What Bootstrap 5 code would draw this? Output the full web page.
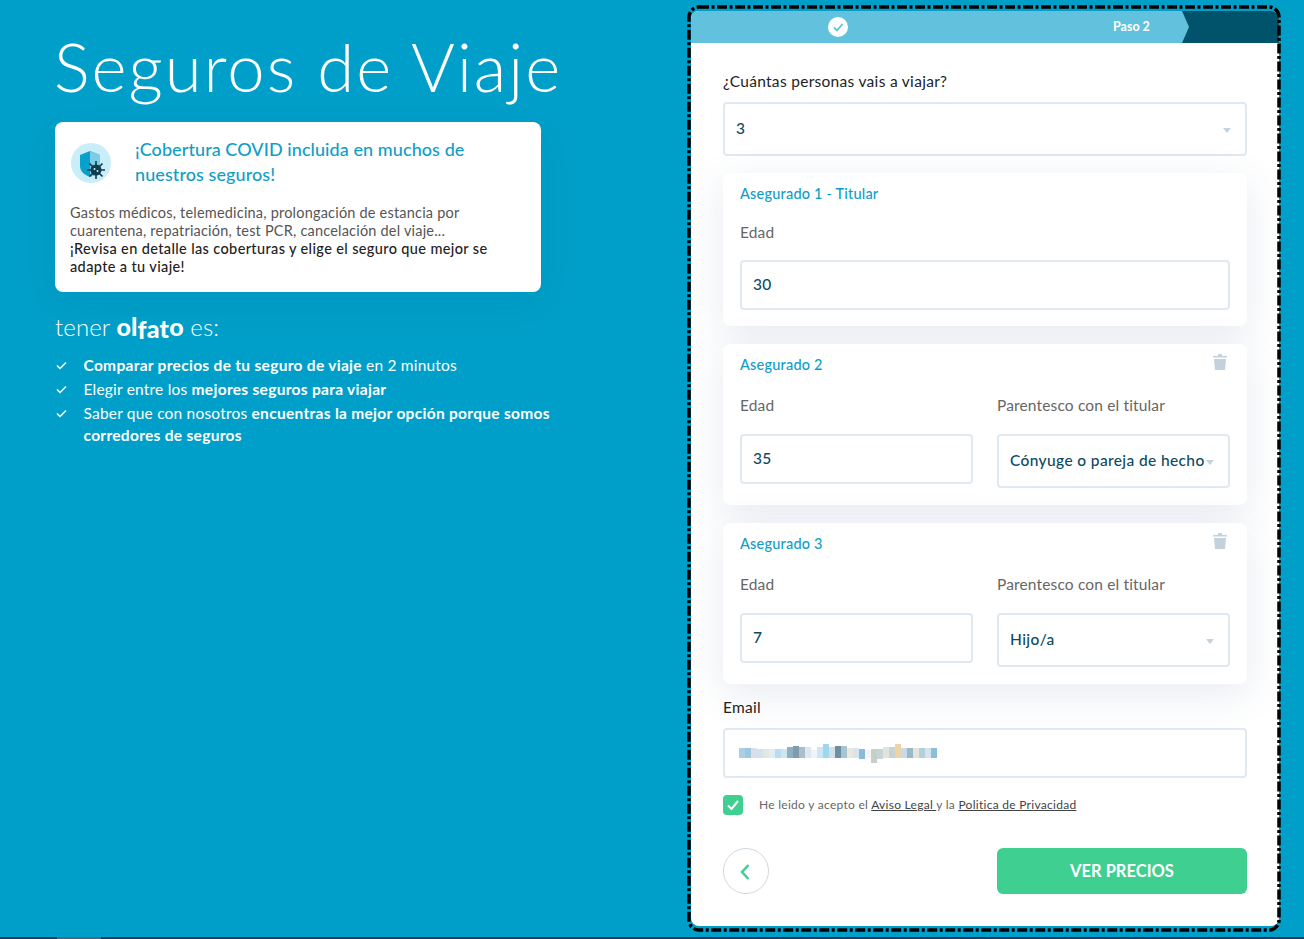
<!doctype html>
<html lang="es"><head><meta charset="utf-8">
<link href="https://cdn.jsdelivr.net/npm/bootstrap@5.3.0/dist/css/bootstrap.min.css" rel="stylesheet">
<style>
html,body{height:100%;overflow:hidden}
body{background:#009fc9;font-family:Lato,"Liberation Sans",sans-serif;color:#222}
.stage{height:937px;padding:5px 23px 0 55px}
.leftcol{width:509px;flex:none;margin-right:123px}
.maintitle{font-size:67px;font-weight:300;color:#fff;line-height:76px;margin:23px 0 18px -1px;letter-spacing:2px;white-space:nowrap}
.covid{width:486px;height:170px;background:#fff;border-radius:8px;padding:15px 15px 0;box-shadow:0 10px 40px rgba(0,60,90,.08)}
.covid-h{font-size:18px;line-height:25px;font-weight:500;color:#109ec6;letter-spacing:.08px;margin-left:65px;width:340px}
.covid-ic{width:40px;height:40px;flex:none;margin-top:6px;left:1px}
.covid-t{font-size:14.500px;line-height:18px;color:#555;margin-top:17px;font-weight:400;letter-spacing:.2px}
.covid-t b{font-weight:500;color:#222;letter-spacing:.37px}
.tener{font-size:24px;font-weight:300;color:#fff;margin:19px 0 0;line-height:30px;letter-spacing:.1px}
.logo{font-weight:900;font-size:25px;letter-spacing:.1px}
.logo span{display:inline-block}
.logo .dn{transform:translateY(3px)}
.logo .dm{transform:translateY(1.500px)}
.perks{list-style:none;padding:0;margin:12px 0 0;color:#fff;font-size:15.5px;line-height:22px;font-weight:400;letter-spacing:.2px}
.perks li{position:relative;padding-left:28.500px;margin-bottom:2px}
.perks b{font-weight:700;letter-spacing:.3px}
.perks svg{position:absolute;left:1px;top:7px;width:11px;height:9px}
.frame{position:relative;width:594px;height:927px;padding:6px 3px 0 4px;flex:none}
.frame-line{position:absolute;left:0;top:0;width:100%;height:100%;pointer-events:none}
.panel{background:#fff;height:915px;width:588px;border-radius:8px;overflow:hidden}
.steps{height:32px;background:#62c2de;position:relative;color:#fff;font-size:12.500px;font-weight:700}
.steps-end{position:absolute;right:0;top:0;height:32px;width:100px}
.steps-check{position:absolute;left:137px;top:6px;width:20px;height:20px}
.steps-lab{position:absolute;left:422px;top:8px;line-height:16px}
.formarea{padding:27px 32px 0}
.qlabel{font-size:15.5px;line-height:22px;margin:0 0 10px;letter-spacing:.3px;color:#222}
.fieldbox{height:54px;border:2px solid #e0e9f0;border-radius:4px;background:#fff;padding:0 11px;display:flex;align-items:center;color:#0d4b5f;font-size:15.5px;font-weight:500;position:relative;letter-spacing:.38px;white-space:nowrap}
.fieldbox.tall{height:50px}
.fieldbox.mailbox{padding-left:14px}
.caret{position:absolute;right:14px;top:50%;margin-top:-1px;border:4.5px solid transparent;border-top:5px solid #c5d3dd;border-bottom:0}
.ins{background:#fff;border-radius:8px;padding:11px 17px 17px;box-shadow:0 10px 40px rgba(60,90,140,.12);position:relative;margin-bottom:18px}
.ins.first{padding-bottom:16px;margin-top:17px}
.ins.last{margin-bottom:12px}
.ins-h{font-size:14.500px;line-height:20px;color:#109ec6;font-weight:500;letter-spacing:.2px}
.ins-l{font-size:15.5px;line-height:22px;color:#666;margin:19px 0 18px;letter-spacing:.15px}
.first .ins-l{margin:17px 0 17px}
.bin{position:absolute;right:20px;top:10px;width:14px;height:16px}
.accept{font-size:12px;color:#666;letter-spacing:.28px;margin-top:17px}
.accept a{color:#444}
.chk{width:20px;height:20px;border-radius:4px;background:#3fcf91;flex:none;margin-right:16px}
.back{width:46px;height:46px;border-radius:50%;border:1px solid #cfd8df;background:#fff;padding:0 2px 2px 0}
.go{width:250px;height:46px;background:#3fcf91;border:0;border-radius:6px;color:#fff;font-weight:700;font-size:16.500px}
.go:hover{background:#3fcf91;color:#fff}
.actions{margin-top:33px}
.baseline{height:2px;background:#1c3a5e;position:relative}
.baseline i{position:absolute;left:57px;width:44px;height:2px;background:#56637f}
</style></head><body>
<div class="d-flex stage">
<div class="leftcol">
<h1 class="maintitle">Seguros de Viaje</h1>
<div class="covid">
<div class="position-relative">
<svg class="covid-ic position-absolute" viewBox="0 0 40 40"><circle cx="20" cy="20" r="20" fill="#c9eef9"/><path d="M9 12l10-4 10 4v11c0 6-5 9-10 11-5-2-10-5-10-11z" fill="#0aa0cc"/><path d="M19 8l10 4v11c0 6-5 9-10 11z" fill="#7ccde5"/><g stroke="#0d3d4f" stroke-width="1.600"><path d="M25 18v18M16 27h18M18.500 20.500l13 13M31.500 20.500l-13 13"/></g><circle cx="25" cy="27" r="5.500" fill="#0d3d4f"/><circle cx="23.500" cy="26" r="1" fill="#c9eef9"/><circle cx="26.500" cy="28" r="1" fill="#c9eef9"/></svg>
<div class="covid-h">¡Cobertura COVID incluida en muchos de nuestros seguros!</div>
</div>
<div class="covid-t">Gastos médicos, telemedicina, prolongación de estancia por<br>cuarentena, repatriación, test PCR, cancelación del viaje...<br><b>¡Revisa en detalle las coberturas y elige el seguro que mejor se</b><br><b>adapte a tu viaje!</b></div>
</div>
<div class="tener">tener <b class="logo"><span>o</span><span>l</span><span class="dn">f</span><span class="dm">a</span><span class="dm">t</span><span>o</span></b> es:</div>
<ul class="perks">
<li><svg viewBox="0 0 11 9"><path d="M1 4.500l3 3 6-6" fill="none" stroke="#fff" stroke-width="1.500"/></svg><b>Comparar precios de tu seguro de viaje</b> en 2 minutos</li>
<li><svg viewBox="0 0 11 9"><path d="M1 4.500l3 3 6-6" fill="none" stroke="#fff" stroke-width="1.500"/></svg>Elegir entre los <b>mejores seguros para viajar</b></li>
<li><svg viewBox="0 0 11 9"><path d="M1 4.500l3 3 6-6" fill="none" stroke="#fff" stroke-width="1.500"/></svg>Saber que con nosotros <b>encuentras la mejor opción porque somos</b><br><b>corredores de seguros</b></li>
</ul>
</div>
<div class="frame">
<div class="panel">
<div class="steps">
<svg class="steps-end" viewBox="0 0 100 32"><path d="M3 0L10 16 3 32H100V0z" fill="#00536b"/></svg>
<svg class="steps-check" viewBox="0 0 20 20"><circle cx="10" cy="10" r="10" fill="#fff"/><path d="M6 10.500l3 3 5.500-6.500" fill="none" stroke="#62c2de" stroke-width="1.800"/></svg>
<span class="steps-lab">Paso 2</span>
</div>
<div class="formarea">
<div class="qlabel">¿Cuántas personas vais a viajar?</div>
<div class="fieldbox">3<span class="caret"></span></div>
<div class="ins first">
<div class="ins-h">Asegurado 1 - Titular</div>
<div class="ins-l">Edad</div>
<div class="fieldbox tall">30</div>
</div>
<div class="ins">
<svg class="bin" viewBox="0 0 14 16"><path d="M0 2h4.500l1-2h3l1 2H14v1.500H0zM1 5h12l-1 11H2z" fill="#c2d1dc"/></svg>
<div class="ins-h">Asegurado 2</div>
<div class="row gx-4">
<div class="col-6"><div class="ins-l">Edad</div><div class="fieldbox tall">35</div></div>
<div class="col-6"><div class="ins-l">Parentesco con el titular</div><div class="fieldbox">Cónyuge o pareja de hecho<span class="caret"></span></div></div>
</div>
</div>
<div class="ins last">
<svg class="bin" viewBox="0 0 14 16"><path d="M0 2h4.500l1-2h3l1 2H14v1.500H0zM1 5h12l-1 11H2z" fill="#c2d1dc"/></svg>
<div class="ins-h">Asegurado 3</div>
<div class="row gx-4">
<div class="col-6"><div class="ins-l">Edad</div><div class="fieldbox tall">7</div></div>
<div class="col-6"><div class="ins-l">Parentesco con el titular</div><div class="fieldbox">Hijo/a<span class="caret"></span></div></div>
</div>
</div>
<div class="qlabel">Email</div>
<div class="fieldbox tall mailbox"><svg width="198" height="20" viewBox="0 0 198 20" aria-hidden="true" shape-rendering="crispEdges"><g><rect x="0" y="5" width="6" height="10" fill="#a8cfe4"/><rect x="6" y="5" width="6" height="10" fill="#9cc8e0"/><rect x="12" y="5" width="6" height="10" fill="#d8dfe6"/><rect x="18" y="6" width="6" height="9" fill="#cfe4ee"/><rect x="24" y="6" width="6" height="9" fill="#e8e6dc"/><rect x="30" y="6" width="6" height="9" fill="#dfeef6"/><rect x="36" y="6" width="6" height="9" fill="#b9dcee"/><rect x="42" y="6" width="6" height="9" fill="#cfe6ee"/><rect x="48" y="4" width="6" height="11" fill="#8fb0c2"/><rect x="54" y="3" width="6" height="12" fill="#7e9cac"/><rect x="60" y="4" width="6" height="11" fill="#a8bfcc"/><rect x="66" y="4" width="6" height="11" fill="#dde8ee"/><rect x="72" y="7" width="6" height="8" fill="#eef3f5"/><rect x="78" y="4" width="6" height="11" fill="#cde6f4"/><rect x="84" y="1" width="6" height="14" fill="#9fd6f0"/><rect x="90" y="4" width="6" height="11" fill="#cfe0e8"/><rect x="96" y="3" width="6" height="12" fill="#6f8f9f"/><rect x="102" y="3" width="6" height="12" fill="#a8c4d0"/><rect x="108" y="5" width="6" height="10" fill="#e8e8e0"/><rect x="114" y="5" width="6" height="10" fill="#d8e4f0"/><rect x="120" y="6" width="6" height="10" fill="#88bcdc"/><rect x="126" y="7" width="6" height="8" fill="#f2f6f7"/><rect x="132" y="6" width="6" height="14" fill="#c4d0c8"/><rect x="138" y="6" width="6" height="10" fill="#c8d4d8"/><rect x="144" y="4" width="6" height="11" fill="#dfe4dc"/><rect x="150" y="4" width="6" height="11" fill="#c8d4d4"/><rect x="156" y="1" width="6" height="14" fill="#ecd4a8"/><rect x="162" y="5" width="6" height="10" fill="#c4dce8"/><rect x="168" y="5" width="6" height="10" fill="#9cb8c4"/><rect x="174" y="5" width="6" height="10" fill="#e4e4dc"/><rect x="180" y="5" width="6" height="10" fill="#b4d0dc"/><rect x="186" y="5" width="6" height="10" fill="#d4e4ec"/><rect x="192" y="5" width="6" height="10" fill="#8cc0d8"/></g></svg></div>
<div class="d-flex align-items-center accept">
<div class="chk"><svg viewBox="0 0 20 20"><path d="M5 10.500l3.500 3.500 6.500-8" fill="none" stroke="#fff" stroke-width="2"/></svg></div>
<div>He leido y acepto el <a href="#">Aviso Legal </a>y la <a href="#">Politica de Privacidad</a></div>
</div>
<div class="d-flex justify-content-between actions">
<button class="btn back" type="button" aria-label="Volver"><svg width="14" height="18" viewBox="0 0 14 18"><path d="M10.500 2L4 9l6.500 7" fill="none" stroke="#3fcf91" stroke-width="2.500"/></svg></button>
<button class="btn go" type="button">VER PRECIOS</button>
</div>
</div>
</div>
<svg class="frame-line" viewBox="0 0 594 927"><rect x="2" y="2" width="590" height="923" rx="10" fill="none" stroke="#000" stroke-width="3.500" stroke-dasharray="10 2.500 3 2.500"/></svg>
</div>
</div>
<div class="baseline"><i></i></div>
</body></html>
